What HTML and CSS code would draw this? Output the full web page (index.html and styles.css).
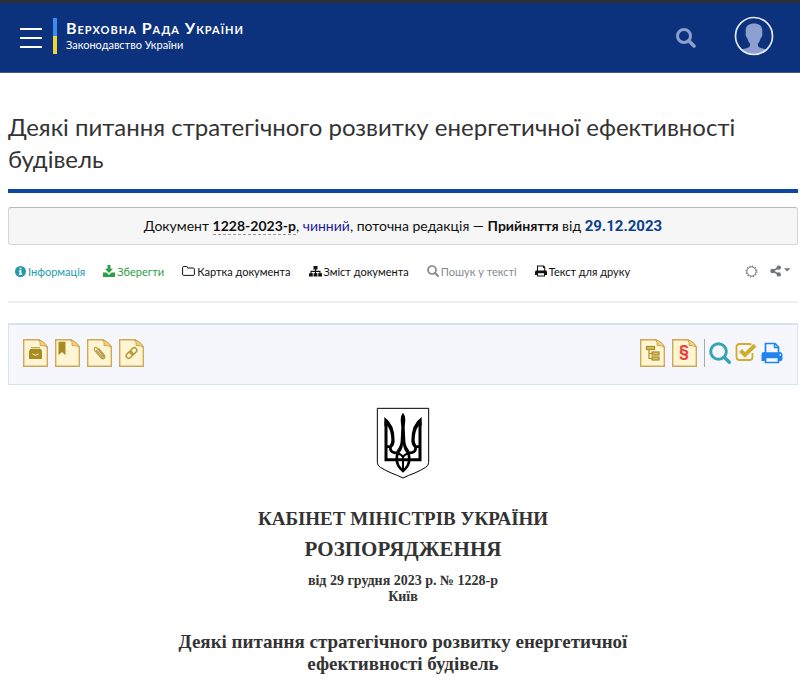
FILE: index.html
```html
<!DOCTYPE html>
<html lang="uk">

<head>
  <meta charset="UTF-8">
  <meta name="viewport" content="width=device-width, initial-scale=1.0">
  <title>Деякі питання стратегічного розвитку енергетичної ефективності будівель</title>
  <link rel="stylesheet" href="styles.css">
</head>

<body>
  <header class="top">
    <button class="menu" type="button" aria-label="Меню"><span></span><span></span><span></span></button>
    <a class="brand" href="#">
      <span class="brand-name">Верховна Рада України</span>
      <span class="brand-sub">Законодавство України</span>
    </a>
    <button class="top-search" type="button" aria-label="Пошук">
      <svg width="20" height="20" viewBox="0 0 20 20" fill="none" stroke="currentColor">
        <circle cx="8" cy="8" r="6.5" stroke-width="3" />
        <path d="M12.8 12.8L18 18" stroke-width="3.6" stroke-linecap="round" />
      </svg>
    </button>
    <button class="avatar" type="button" aria-label="Кабінет">
      <svg width="40" height="40" viewBox="0 0 40 40">
        <path fill="#8d9fce" d="M20 7.500c-5.200 0-8.600 2.800-8.300 7.500.1 2 .2 2.600-.2 3.300.1 2.400 1.400 3.500 1.800 3.700.5 2.700 1.600 4.300 2.700 5.400.2 2-.1 3.300-1.600 4-2.400 1.100-5.800 1.300-7.800 2.900A18.500 18.500 0 0 0 20 38.500a18.500 18.500 0 0 0 13.400-4.200c-2-1.600-5.400-1.800-7.800-2.900-1.500-.7-1.800-2-1.600-4 1.100-1.100 2.200-2.700 2.700-5.400.4-.2 1.700-1.300 1.800-3.700-.4-.7-.3-1.300-.2-3.300.3-4.700-3.100-7.500-8.300-7.500z" />
        <circle cx="20" cy="20" r="18.500" fill="none" stroke="#e4e9f5" stroke-width="1.700" />
      </svg>
    </button>
  </header>

  <main>
    <h1>Деякі питання стратегічного розвитку енергетичної ефективності будівель</h1>

    <p class="status">
      Документ <strong class="number">1228-2023-р</strong>, <span class="valid">чинний</span>, поточна редакція —
      <strong>Прийняття</strong> від <a class="date" href="#">29.12.2023</a>
    </p>

    <nav class="tabs">
      <a class="info" href="#">
        <svg width="11" height="11" viewBox="0 0 12 12">
          <circle cx="6" cy="6" r="6" fill="currentColor" />
          <path fill="#fff" d="M5 1.800h2v1.800H5zM4.200 4.700H7v3.600h.8v1.300H4.200V8.300H5V6h-.8z" />
        </svg>Інформація</a>
      <a class="save" href="#">
        <svg width="12" height="12" viewBox="0 0 12 12" fill="currentColor">
          <path d="M4.500 0h3v3.800H10L6 8 2 3.800h2.500zM0 7.500h3.400L6 10l2.600-2.500H12V12H0z" />
        </svg>Зберегти</a>
      <a href="#">
        <svg width="13" height="12" viewBox="0 0 13 12" fill="none" stroke="currentColor">
          <path d="M1.800 1.500h2.800q.8 0 .8.800v.7h5.800q1.200 0 1.200 1.200v5q0 1.200-1.200 1.200H1.800Q.6 10.400.6 9.200V2.700q0-1.200 1.200-1.200z" />
        </svg>Картка документа</a>
      <a href="#">
        <svg width="13" height="12" viewBox="0 0 13 12" fill="currentColor">
          <path d="M4.500 1h4v3.500H7.100v1.300h4.400v2.400H13V11.500H9.200V8.200h1.200V6.900H7.100v1.300h1.300v3.300H4.600V8.200h1.300V6.900H2.600v1.300h1.200v3.300H0V8.200h1.500V5.800h4.400V4.500H4.500z" />
        </svg>Зміст документа</a>
      <a class="muted" href="#">
        <svg width="12" height="12" viewBox="0 0 12 12" fill="none" stroke="currentColor">
          <circle cx="5" cy="5" r="4" stroke-width="1.700" />
          <path d="M8 8l3 3" stroke-width="2" stroke-linecap="round" />
        </svg>Пошук у тексті</a>
      <a href="#">
        <svg width="12" height="12" viewBox="0 0 12 12">
          <path fill="currentColor" d="M2 .5h6.800L10.200 2v3.300Q12 5.300 12 7v3h-2v1.500H2V10H0V7q0-1.700 2-1.700z" />
          <path fill="#fff" d="M3 1.500h5v1.400h1.200v2.600H3zM3 8.300h6v2.200H3z" />
        </svg>Текст для друку</a>
      <button class="theme" type="button" aria-label="Вигляд">
        <svg width="13" height="13" viewBox="0 0 13 13" fill="none" stroke="currentColor">
          <circle cx="6.500" cy="6.500" r="4.600" />
          <circle cx="6.500" cy="6.500" r="5.400" stroke-dasharray="1.200 1.627" stroke-width="1.200" />
        </svg>
      </button>
      <button class="share" type="button" aria-label="Поділитися">
        <svg width="21" height="12" viewBox="0 0 21 12" fill="currentColor">
          <path d="M9 2.500L2.500 6 9 9.500" fill="none" stroke="currentColor" stroke-width="1.500" />
          <circle cx="2.600" cy="6" r="2.300" />
          <circle cx="8.800" cy="2.600" r="2.200" />
          <circle cx="8.800" cy="9.400" r="2.200" />
          <path d="M14 3.200h6.400l-3.200 3.400z" />
        </svg>
      </button>
    </nav>

    <div class="toolbar">
      <button type="button" aria-label="Архів">
        <svg class="sheet" viewBox="0 0 25 28">
          <path class="page" d="M.7.700h15.600l8 7v19.600H.7z" />
          <path class="fold" d="M15.500.900q2.500 2.600 1.500 5.600 4-.5 7.200 1.700Q22.500 2.500 15.500.9z" />
          <path fill="#a88b21" d="M8 8.200h9v1H8zM7 10h11l.8 2H6.200z" />
          <path fill="#a88b21" d="M6 12h13v8H6z" />
          <path fill="none" stroke="#fff5d2" d="M9.500 15q3 2.400 6 0" />
        </svg>
      </button>
      <button type="button" aria-label="Закладка">
        <svg class="sheet" viewBox="0 0 25 28">
          <path class="page" d="M.7.700h15.600l8 7v19.600H.7z" />
          <path class="fold" d="M15.500.900q2.500 2.600 1.500 5.600 4-.5 7.200 1.700Q22.500 2.500 15.500.9z" />
          <path fill="#a88b21" d="M3.500 2.800h7v13.400L7 13l-3.500 3.200z" />
        </svg>
      </button>
      <button type="button" aria-label="Додатки">
        <svg class="sheet" viewBox="0 0 25 28">
          <path class="page" d="M.7.700h15.600l8 7v19.600H.7z" />
          <path class="fold" d="M15.500.900q2.500 2.600 1.500 5.600 4-.5 7.200 1.700Q22.500 2.500 15.500.9z" />
          <path fill="none" stroke="#b59c48" stroke-width="1.200" stroke-linecap="round" d="M9.500 11.500l5.800 6.500q1.400.8 1.500-.7L10.500 9.500Q8.500 7.700 7.500 9q-.8 1.200.5 2.800l6 7q2 1.800 3.500.3 1-1.300-.2-3L12 9.800" />
        </svg>
      </button>
      <button type="button" aria-label="Посилання">
        <svg class="sheet" viewBox="0 0 25 28">
          <path class="page" d="M.7.700h15.600l8 7v19.600H.7z" />
          <path class="fold" d="M15.500.900q2.500 2.600 1.500 5.600 4-.5 7.200 1.700Q22.500 2.500 15.500.9z" />
          <g fill="none" stroke="#b1952e" stroke-width="1.400" transform="rotate(-45 12.500 14)">
            <rect x="6" y="11.500" width="7.500" height="5" rx="2.500" />
            <rect x="11.500" y="11.500" width="7.500" height="5" rx="2.500" />
          </g>
        </svg>
      </button>
      <button class="first-right" type="button" aria-label="Структура">
        <svg class="sheet" viewBox="0 0 25 28">
          <path class="page" d="M.7.700h15.600l8 7v19.600H.7z" />
          <path class="fold" d="M15.500.900q2.500 2.600 1.500 5.600 4-.5 7.200 1.700Q22.500 2.500 15.500.9z" />
          <g fill="#d9c06a" stroke="#a88b21" stroke-width="1.200">
            <path fill="none" d="M9 10.500v9h3M9 14.500h3" />
            <rect x="6.500" y="7.500" width="8" height="3" />
            <rect x="12" y="13" width="7" height="3" />
            <rect x="12" y="18" width="7" height="3" />
          </g>
        </svg>
      </button>
      <button type="button" aria-label="Статті">
        <svg class="sheet" viewBox="0 0 25 28">
          <path class="page" d="M.7.700h15.600l8 7v19.600H.7z" />
          <path class="fold" d="M15.500.900q2.500 2.600 1.500 5.600 4-.5 7.200 1.700Q22.500 2.500 15.500.9z" />
          <text class="section-sign" x="12" y="18" text-anchor="middle">§</text>
        </svg>
      </button>
      <span class="divider"></span>
      <button type="button" aria-label="Пошук у тексті">
        <svg width="22" height="22" viewBox="0 0 22 22" fill="none" stroke="#38a3b4">
          <circle cx="9.500" cy="9.500" r="7.800" stroke-width="3" />
          <path d="M15.300 15.300l5 5" stroke-width="3.400" stroke-linecap="round" />
        </svg>
      </button>
      <button type="button" aria-label="Позначити">
        <svg width="22" height="22" viewBox="0 0 22 22" fill="none" stroke="#cfae2c">
          <path d="M16.500 2.500Q15.700 2 14.500 2h-10Q1.500 2 1.500 5v10q0 3 3 3h10q3 0 3-3v-4" stroke-width="1.800" />
          <path d="M5.500 8.500l4.500 4.500 10-9.800" stroke-width="4" />
        </svg>
      </button>
      <button type="button" aria-label="Друк">
        <svg width="22" height="22" viewBox="0 0 22 22">
          <path fill="#2084ee" d="M.5 19v-6q0-3 3-3h15q3 0 3 3v4q0 2-2 2z" />
          <path fill="#f5f7fc" stroke="#2084ee" stroke-width="1.700" d="M4.500 11V1.500h9.500l3.500 3.500v6zM4.500 15.500h13v5h-13z" />
          <path fill="none" stroke="#2084ee" stroke-width="1.400" d="M13.500 1.500v4h4" />
          <path fill="#fff" d="M18.500 12h1.500v1.500h-1.500z" />
        </svg>
      </button>
    </div>

    <article>
      <svg class="emblem" width="54" height="72" viewBox="0 0 162 216" fill="none" stroke="#000">
        <path stroke-width="3" d="M4 4h154v162q0 10-9 15-14 9-35 18-17 6-33 14-16-8-33-14-21-9-35-18-9-5-9-15z" />
        <path stroke-width="9" d="M30 44v114h102V44" />
        <!-- outer prongs -->
        <path fill="#000" stroke="none" d="M25 30q32 22 31 72 0 9-6 18l-9-6q5-6 5-14 0-28-12-44h-9z" />
        <path fill="#000" stroke="none" d="M137 30q-32 22-31 72 0 9 6 18l9-6q-5-6-5-14 0-28 12-44h9z" />
        <!-- middle prong -->
        <path fill="#000" stroke="none" d="M81 17q-9 11-7 22l2 22-2 40q0 14-12 30l8 7q11-13 11-28 0 15 11 28l8-7q-12-16-12-30l-2-40 2-22q2-11-7-22z" />
        <path stroke-width="8" d="M30 119h14c-4 14 7 20 21 18M132 119h-14c4 14-7 20-21 18" />
        <path stroke-width="8" d="M66 134q-8 26 1 42 6 10 14 16 8-6 14-16 9-16 1-42" />
        <path stroke-width="6" d="M66 140q9 0 15 10 6-10 15-10M81 148v42" />
      </svg>
      <h2 class="issuer">КАБІНЕТ МІНІСТРІВ УКРАЇНИ</h2>
      <h2 class="kind">РОЗПОРЯДЖЕННЯ</h2>
      <p class="issued">від 29 грудня 2023 р. № 1228-р<br>Київ</p>
      <h3>Деякі питання стратегічного розвитку енергетичної ефективності будівель</h3>
    </article>
  </main>
</body>

</html>
```

FILE: styles.css
```css
* {
  box-sizing: border-box;
}

body {
  margin: 0;
  background: #fff;
  color: #212529;
  font-family: Lato, "Open Sans", sans-serif;
}

button {
  display: flex;
  padding: 0;
  border: 0;
  background: none;
  color: inherit;
}

a {
  color: inherit;
  text-decoration: none;
}

svg {
  flex: none;
}

.top {
  display: flex;
  align-items: center;
  height: 73px;
  padding: 0 26px 0 20px;
  border-top: 3px solid #2b2e38;
  border-bottom: 1px solid #41558c;
  background: #0c317d;
  color: #fff;
}

.menu {
  flex-direction: column;
  gap: 7px;
  width: 22px;
  margin-right: 11px;
}

.menu span {
  width: 100%;
  height: 2px;
  background: #fff;
}

.brand {
  display: flex;
  flex-direction: column;
  justify-content: center;
  height: 36px;
  margin: 0 auto 4px 0;
  padding-left: 9px;
  border-left: 4px solid;
  border-image: linear-gradient(#3a8bf0 50%, #efd436 50%) 1;
}

.brand-name {
  font-size: 16px;
  font-weight: 700;
  font-variant: small-caps;
  letter-spacing: 1px;
  line-height: 18px;
}

.brand-sub {
  font-size: 11px;
  line-height: 16px;
}

.top-search {
  margin-right: 38px;
  color: #8d9fce;
}

.avatar {
  margin-bottom: 4px;
}

main {
  padding: 0 2px 0 8px;
}

h1 {
  margin: 38px 0 14px;
  padding-bottom: 14px;
  border-bottom: 4px solid #0c47a1;
  color: #333;
  font-size: 24px;
  font-weight: 400;
  line-height: 32px;
}

.status {
  margin: 0;
  padding: 7px;
  border: 1px solid #d5d5d5;
  border-top-color: #b9b9b9;
  border-radius: 3px;
  background: #f6f6f6;
  color: #111;
  font-size: 14px;
  line-height: 22px;
  text-align: center;
}

.number {
  border-bottom: 1px dashed #999;
}

.valid {
  color: #1a1a9c;
}

.date {
  color: #0c418c;
  font-family: Roboto, sans-serif;
  font-size: 15px;
  font-weight: 700;
}

.tabs {
  display: flex;
  align-items: center;
  gap: 18px;
  height: 58px;
  padding: 0 7px 4px;
  border-bottom: 2px solid #eee;
  color: #111;
  font-size: 11px;
  white-space: nowrap;
}

.tabs a {
  display: flex;
  align-items: center;
  gap: 2px;
}

.tabs .info {
  color: #2699ae;
}

.tabs .save {
  color: #2b9f45;
}

.tabs .muted {
  color: #838a90;
}

.theme,
.share {
  color: #6c757d;
}

.theme {
  margin-left: auto;
}

.share {
  margin-left: -6px;
}

.toolbar {
  display: flex;
  align-items: center;
  gap: 7px;
  height: 62px;
  margin-top: 20px;
  padding: 0 14px 3px;
  border: 1px solid #d6e4f0;
  border-top-width: 2px;
  background: #f5f7fc;
}

.sheet {
  width: 25px;
  height: 28px;
}

.page {
  fill: #fff5d2;
  stroke: #cfa859;
  stroke-width: 1.4px;
}

.fold {
  fill: #f2cd72;
  stroke: #cfa859;
}

.section-sign {
  fill: #ee3d3d;
  font: 700 16px Roboto, sans-serif;
}

.first-right {
  margin-left: auto;
}

.divider {
  width: 1px;
  height: 28px;
  background: #aaa;
}

.divider ~ button {
  margin-left: -3px;
}

article {
  padding: 22px 0;
  color: #333;
  font-family: "Liberation Serif", serif;
  text-align: center;
}

.emblem {
  display: block;
  margin: 0 auto 28px;
}

h2 {
  margin: 0;
  line-height: 24px;
}

.issuer {
  font-size: 19px;
}

.kind {
  margin: 6px 0 12px;
  font-size: 21px;
}

.issued {
  margin: 0;
  font-size: 14px;
  font-weight: 700;
  line-height: 16px;
}

h3 {
  max-width: 480px;
  margin: 26px auto 0;
  font-size: 19px;
  line-height: 22px;
}
```
